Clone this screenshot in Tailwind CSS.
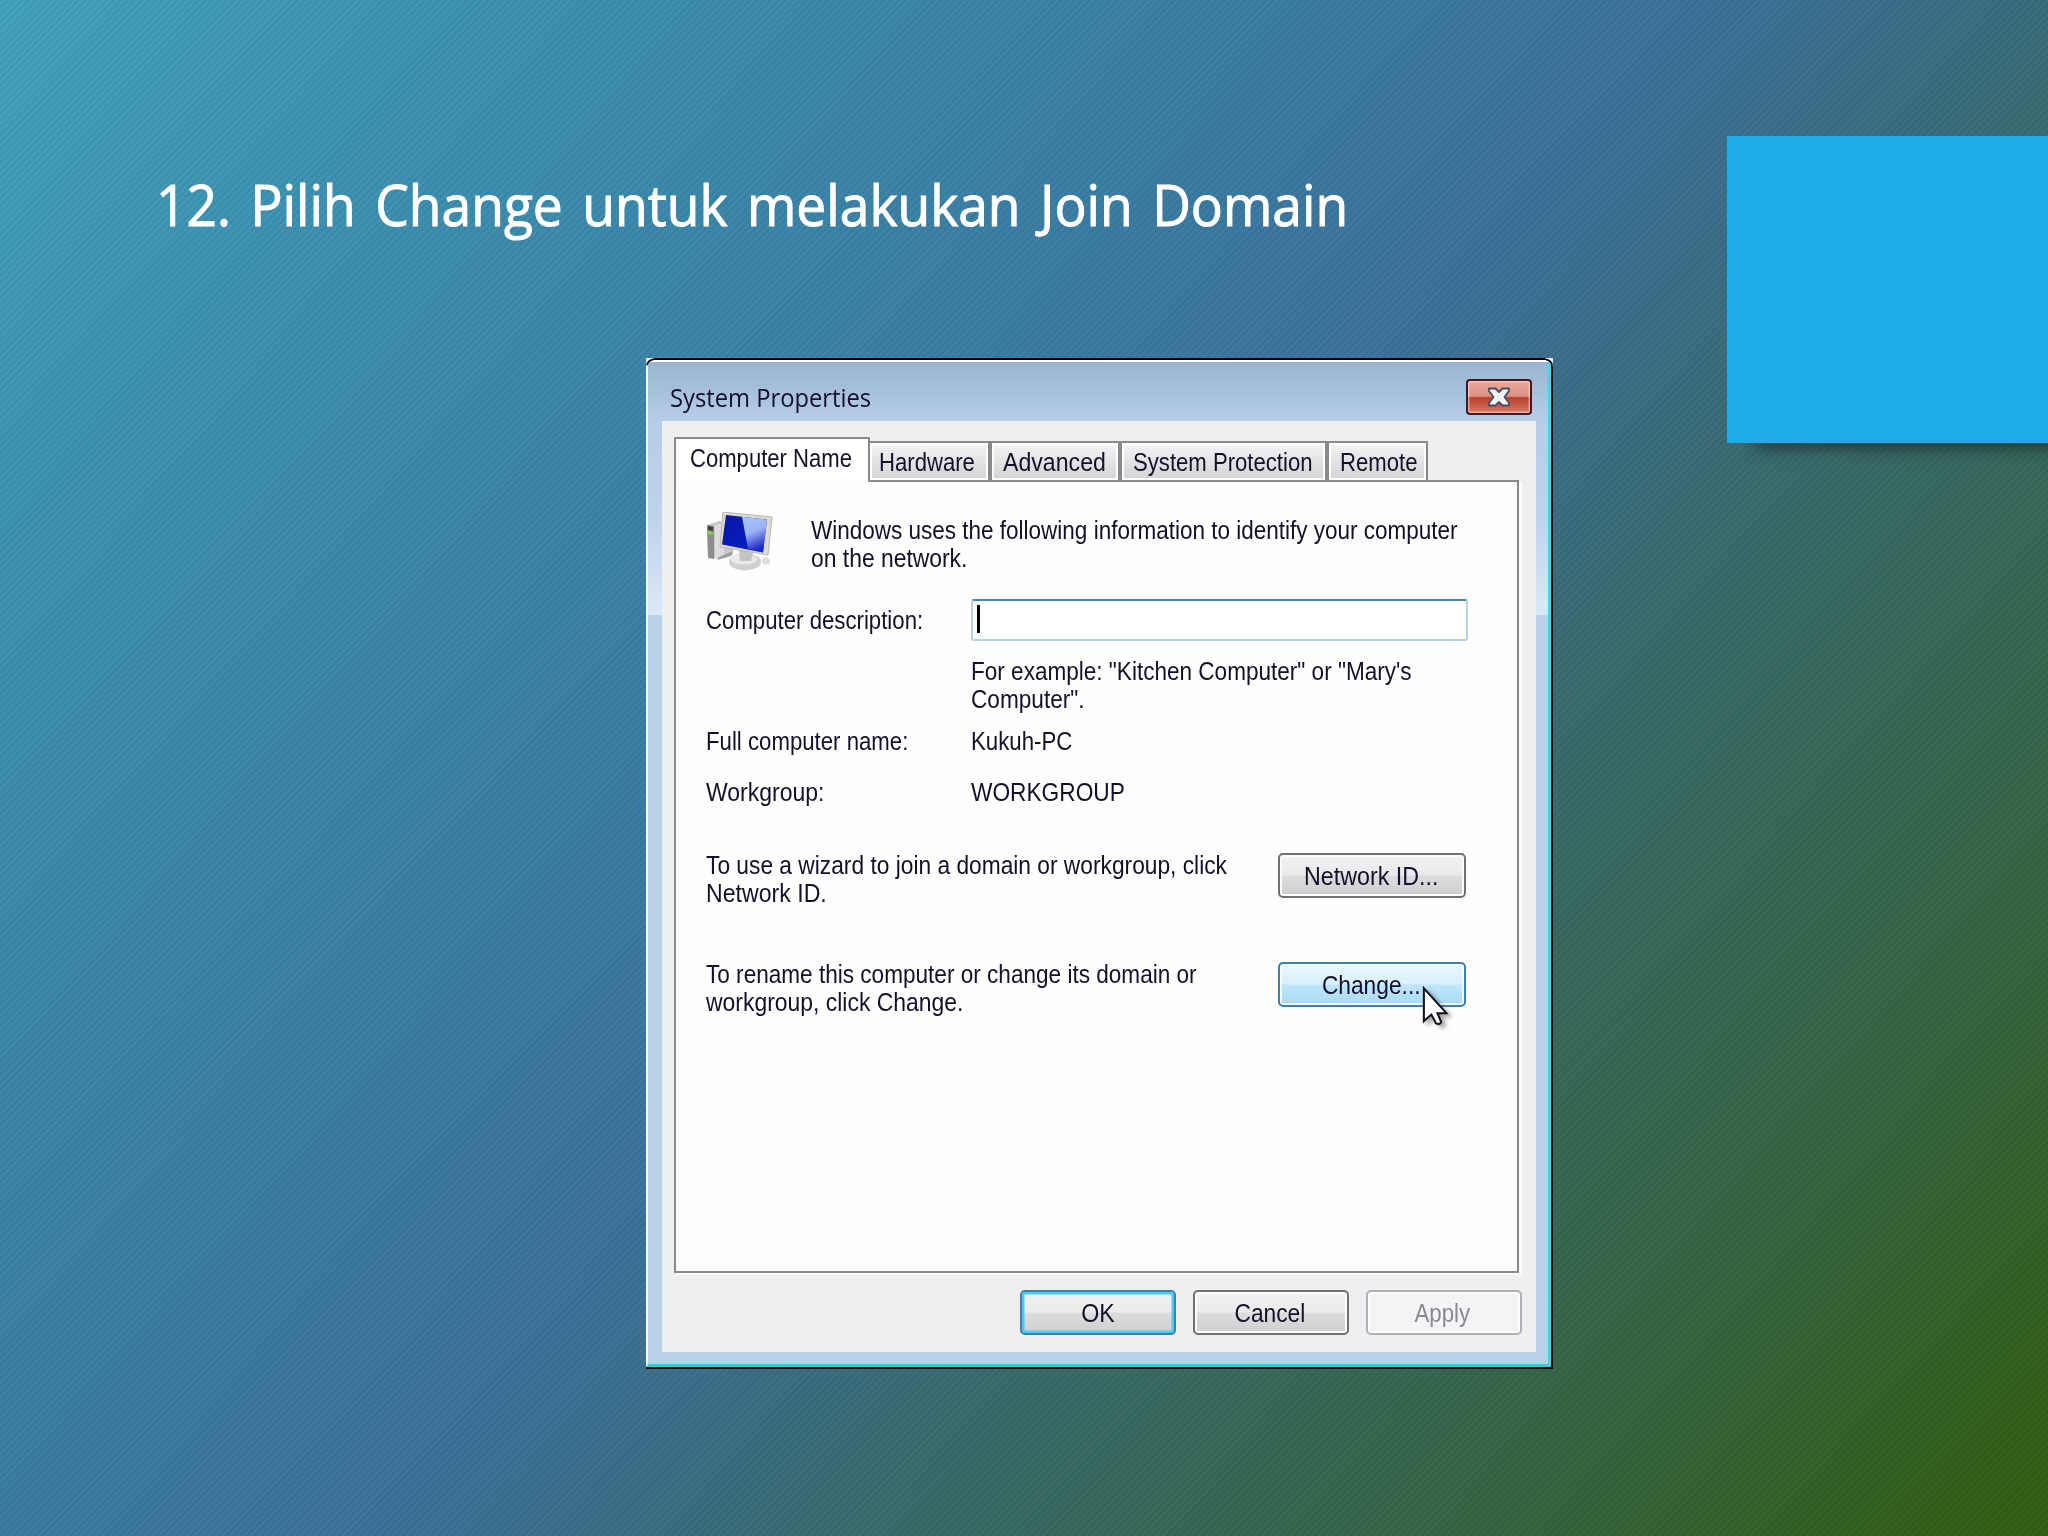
<!DOCTYPE html>
<html lang="id">
    <head>
        <meta charset="utf-8">
        <title>Join Domain</title>
        <meta name="viewport" content="width=device-width, initial-scale=1">
        <script src="https://cdn.jsdelivr.net/npm/@tailwindcss/browser@4"></script>
    </head>
    <body class="relative w-[2048px] h-[1536px] overflow-hidden bg-[repeating-linear-gradient(135deg,rgba(0,20,40,0.075)_0px,rgba(0,20,40,0.075)_1.5px,rgba(255,255,255,0.02)_3px,rgba(0,20,40,0.075)_5px),linear-gradient(131deg,#44a5c1_0%,#3f95b5_14%,#3c83a8_34%,#3e749e_50%,#3c7089_57%,#3a6d6d_65%,#386a57_74%,#366642_83%,#34611f_94%,#33600f_100%)] font-['Liberation_Sans',sans-serif] text-[25px] leading-[28px] text-[#15102a]">
        <h1 class="pt-[164px] pl-[156px] text-[57px] leading-[80px] font-['Open_Sans',sans-serif] [word-spacing:6px] [-webkit-text-stroke:1px_white] text-white whitespace-nowrap"><span class="inline-block origin-left scale-x-[0.936]">12. Pilih Change untuk melakukan Join Domain</span></h1>
        <div class="absolute left-[1727px] top-[136px] w-[321px] h-[307px] bg-[#1eace6] shadow-[20px_14px_14px_-8px_rgba(20,35,40,0.65)]"></div>

        <!-- dialog window -->
        <div class="absolute left-[646px] top-[358px] w-[907px] h-[1011px] border-y-2 border-r-2 border-black">
            <div class="h-full border-t-2 border-l-2 border-r-3 border-b-3 border-t-white border-l-white border-r-[#4fcfe8] border-b-[#3fc6dc] bg-[#b9d1e9] flex flex-col">
                <div class="h-[59px] shrink-0 flex items-start justify-between pl-[22px] pr-[16px] bg-linear-to-b from-[#99b5d0] to-[#b6cde9]">
                    <p class="mt-[21px] font-['Open_Sans',sans-serif] whitespace-nowrap"><span class="inline-block origin-left scale-x-[0.95]">System Properties</span></p>
                    <div class="mt-[17px] w-[66px] h-[36px] rounded-[4px] border-2 border-[#4a1626] flex items-center justify-center bg-[linear-gradient(#e9aa9f_0%,#dc8f82_48%,#bb412d_52%,#d27864_100%)] shadow-[inset_0_0_0_1.5px_rgba(255,220,210,0.55)]">
                        <svg class="w-[24px] h-[20px]" viewBox="0 0 24 20">
                            <path d="M2 1.500h6.500l3.500 3.500 3.500-3.500H22v2.500L17.500 10 22 16v2.500h-6.500l-3.500-3.500-3.500 3.500H2V16l4.500-6L2 4z" fill="#f3f3f5" stroke="#4a4b60" stroke-width="1.800" stroke-linejoin="round"/>
                        </svg>
                    </div>
                </div>
                <div class="h-[931px] shrink-0 flex">
                    <div class="w-[14px] h-[194px] bg-linear-to-b from-[#b6cde9] via-[#bdd3ec] to-[#dbe8f8]"></div>
                    <div class="w-[874px] bg-[#f0eef1] pt-[16px] pl-[12px]">
                        <!-- tabs -->
                        <div class="relative h-[45px] -mb-[2px] flex items-end whitespace-nowrap">
                            <div class="w-[196px] h-[45px] border-2 border-b-0 border-[#8b898c] bg-white pl-[14px] pt-[5px]"><span class="inline-block origin-left scale-x-[0.883]">Computer Name</span></div>
                            <div class="w-[120px] h-[41px] border-2 border-l-0 border-[#8b898c] bg-linear-to-b from-[#f4f3f5] to-[#d3d2d4] shadow-[inset_0_0_0_2px_#fff] pl-[9px] pt-[5px]"><span class="inline-block origin-left scale-x-[0.885]">Hardware</span></div>
                            <div class="w-[130px] h-[41px] border-2 border-[#8b898c] bg-linear-to-b from-[#f4f3f5] to-[#d3d2d4] shadow-[inset_0_0_0_2px_#fff] pl-[11px] pt-[5px]"><span class="inline-block origin-left scale-x-[0.925]">Advanced</span></div>
                            <div class="w-[207px] h-[41px] border-2 border-[#8b898c] bg-linear-to-b from-[#f4f3f5] to-[#d3d2d4] shadow-[inset_0_0_0_2px_#fff] pl-[11px] pt-[5px]"><span class="inline-block origin-left scale-x-[0.885]">System Protection</span></div>
                            <div class="w-[101px] h-[41px] border-2 border-[#8b898c] bg-linear-to-b from-[#f4f3f5] to-[#d3d2d4] shadow-[inset_0_0_0_2px_#fff] pl-[11px] pt-[5px]"><span class="inline-block origin-left scale-x-[0.885]">Remote</span></div>
                        </div>
                        <div class="w-[845px] h-[793px] border-2 border-[#8b898c] bg-[#fefefe] pt-[28px] pl-[30px] whitespace-nowrap shadow-[3px_2px_0_#fbfafc]">
                            <div class="h-[89px] flex">
                                <svg class="mt-[2px] w-[70px] h-[62px] mr-[35px] shrink-0" viewBox="0 0 70 62">
                                    <defs>
                                        <linearGradient id="screen" x1="0" y1="0" x2="1" y2="1">
                                            <stop offset="0" stop-color="#0716a0"/>
                                            <stop offset="1" stop-color="#0a1fd0"/>
                                        </linearGradient>
                                        <linearGradient id="shine" x1="0" y1="0" x2="0.300" y2="1">
                                            <stop offset="0" stop-color="#a9c6ff"/>
                                            <stop offset="0.500" stop-color="#9db4f6"/>
                                            <stop offset="1" stop-color="#1a2bc8"/>
                                        </linearGradient>
                                    </defs>
                                    <path d="M1 13l12-4 14 4v30L15 47 2 45z" fill="#c9c7c7"/>
                                    <path d="M1 13l7 1v33l-6-1z" fill="#8d8b8b"/>
                                    <path d="M9 13l9-2v35l-9 1z" fill="#dedcdc"/>
                                    <path d="M2 14l5 1v4l-5-1z" fill="#3d3d3d"/>
                                    <path d="M2 19l5 1v3l-5-1z" fill="#7bd63a"/>
                                    <path d="M13 45l14-6-2 5-14 4z" fill="#a09e9e"/>
                                    <ellipse cx="39" cy="50" rx="16" ry="8.500" fill="#d2d0cf"/>
                                    <ellipse cx="38" cy="47.500" rx="13" ry="5" fill="#ebeae8"/>
                                    <path d="M33 38l14 3-2 8h-11z" fill="#c6c4c2"/>
                                    <ellipse cx="60" cy="49" rx="4" ry="3.500" fill="#dddbd9"/>
                                    <path d="M17 0l49 5-4 38-48-8z" fill="#dcdad3" stroke="#b9b7b1" stroke-width="1"/>
                                    <path d="M20 3l41 4.500-4 33-41-8z" fill="url(#screen)"/>
                                    <path d="M36 4.700l25 2.800-4 33-15-4z" fill="url(#shine)"/>
                                </svg>
                                <div class="mt-[6px]">
                                    <p><span class="inline-block origin-left scale-x-[0.9]">Windows uses the following information to identify your computer</span></p>
                                    <p><span class="inline-block origin-left scale-x-[0.915]">on the network.</span></p>
                                </div>
                            </div>
                            <div class="h-[58px] flex">
                                <p class="w-[265px] mt-[7px]"><span class="inline-block origin-left scale-x-[0.888]">Computer description:</span></p>
                                <div class="w-[497px] h-[42px] rounded-[3px] border-2 border-[#b4d3e8] border-t-[#4a86ac] bg-white pt-[4px] pl-[4px]">
                                    <div class="w-[3px] h-[28px] bg-black"></div>
                                </div>
                            </div>
                            <div class="h-[70px] pl-[265px]">
                                <p><span class="inline-block origin-left scale-x-[0.902]">For example: "Kitchen Computer" or "Mary's</span></p>
                                <p><span class="inline-block origin-left scale-x-[0.905]">Computer".</span></p>
                            </div>
                            <div class="h-[52px] flex">
                                <p class="w-[265px]"><span class="inline-block origin-left scale-x-[0.888]">Full computer name:</span></p>
                                <p><span class="inline-block origin-left scale-x-[0.89]">Kukuh-PC</span></p>
                            </div>
                            <div class="h-[72px] flex">
                                <p class="w-[265px] -mt-px"><span class="inline-block origin-left scale-x-[0.92]">Workgroup:</span></p>
                                <p class="-mt-px"><span class="inline-block origin-left scale-x-[0.908]">WORKGROUP</span></p>
                            </div>
                            <div class="h-[109px] flex">
                                <div class="w-[572px]">
                                    <p><span class="inline-block origin-left scale-x-[0.91]">To use a wizard to join a domain or workgroup, click</span></p>
                                    <p><span class="inline-block origin-left scale-x-[0.925]">Network ID.</span></p>
                                </div>
                                <div class="mt-[2px] w-[188px] h-[45px] rounded-[5px] border-2 border-[#737074] shadow-[inset_0_0_0_2px_#fbfbfb] bg-[linear-gradient(#f3f2f3_0%,#ebe9eb_48%,#dddbdd_52%,#cfcdd0_100%)] flex justify-center pt-[7px] pr-[2px]"><span class="inline-block scale-x-[0.93]">Network ID...</span></div>
                            </div>
                            <div class="flex">
                                <div class="w-[572px]">
                                    <p><span class="inline-block origin-left scale-x-[0.903]">To rename this computer or change its domain or</span></p>
                                    <p><span class="inline-block origin-left scale-x-[0.917]">workgroup, click Change.</span></p>
                                </div>
                                <div class="relative mt-[2px] w-[188px] h-[45px] rounded-[5px] border-2 border-[#3c7fb1] shadow-[inset_0_0_0_2px_#f4fbff] bg-[linear-gradient(#eaf6fd_0%,#d9f0fc_48%,#bee6fd_52%,#a9daf5_100%)] flex justify-center pt-[7px] pr-[2px]"><span class="inline-block scale-x-[0.91]">Change...</span>
                                    <svg class="absolute left-[142px] top-[22px] w-[30px] h-[44px] drop-shadow-[4px_3px_2px_rgba(0,0,0,0.35)]" viewBox="0 0 32 46">
                                        <path d="M2 2v35l8-7 5 9.500q3.500 2 5.500-1.500L16.500 28.500H26z" fill="#fff" stroke="#141420" stroke-width="2.200" stroke-linejoin="miter"/>
                                    </svg>
                                </div>
                            </div>
                        </div>
                        <div class="mt-[17px] w-[848px] flex justify-end gap-[17px]">
                            <div class="w-[156px] h-[45px] rounded-[5px] border-2 border-[#3c7fb1] shadow-[inset_0_0_0_2.5px_#46cdf3] bg-[linear-gradient(#f3f2f3_0%,#ebebeb_48%,#dddddd_52%,#cfcfcf_100%)] flex justify-center pt-[7px]"><span class="inline-block scale-x-[0.93]">OK</span></div>
                            <div class="w-[156px] h-[45px] rounded-[5px] border-2 border-[#737074] shadow-[inset_0_0_0_2px_#fbfbfb] bg-[linear-gradient(#f3f2f3_0%,#ebebeb_48%,#dddddd_52%,#cfcfcf_100%)] flex justify-center pt-[7px] pr-[2px]"><span class="inline-block scale-x-[0.91]">Cancel</span></div>
                            <div class="w-[156px] h-[45px] rounded-[5px] border-2 border-[#b1afb4] shadow-[inset_0_0_0_2px_#fbfbfb] bg-[#f4f3f5] text-[#8a8894] flex justify-center pt-[7px] pr-[3px]"><span class="inline-block scale-x-[0.89]">Apply</span></div>
                        </div>
                    </div>
                    <div class="w-[12px] h-[194px] bg-linear-to-b from-[#b6cde9] via-[#bdd3ec] to-[#dbe8f8]"></div>
                </div>
            </div>
            <!-- rounded frame corners -->
            <svg class="absolute left-0 -top-[2px] w-[8px] h-[8px]" viewBox="0 0 9 9">
                <path d="M0 0h9L0 9z" fill="#e8f0f4"/>
                <path d="M1 8Q2 3 8 1.500" fill="none" stroke="#000" stroke-width="2"/>
            </svg>
            <svg class="absolute -right-[2px] -top-[2px] w-[8px] h-[8px]" viewBox="0 0 9 9">
                <path d="M9 0H0l9 9z" fill="#e8f0f4"/>
                <path d="M8 8Q7 3 1 1.500" fill="none" stroke="#000" stroke-width="2"/>
            </svg>
        </div>
    </body>
</html>
